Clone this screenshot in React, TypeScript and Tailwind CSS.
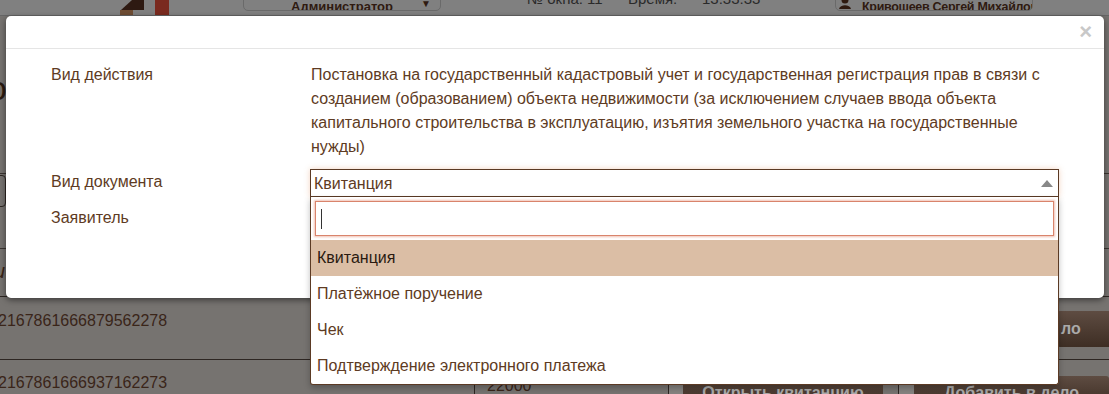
import React from "react";

const options = ["Квитанция", "Платёжное поручение", "Чек", "Подтверждение электронного платежа"];

function Header() {
  return (
    <div className="h-[16px] border-b border-[#666] bg-[#808080] flex items-start overflow-hidden shrink-0">
      <svg width="52" height="16" viewBox="0 0 52 16" className="ml-[118px] shrink-0">
        <polygon points="3,10 14,0 26,0 26,10" fill="#2e1a12" />
        <rect x="2" y="10" width="13" height="6" fill="#6e4c33" />
        <rect x="37" y="0" width="14" height="16" fill="#7a2a1f" />
      </svg>
      <div className="ml-[73px] w-[198px] h-[12px] -mt-[1px] border border-[#6a6a6a] rounded-b-[5px] flex items-end justify-center relative overflow-hidden shrink-0">
        <span className="text-[13px] font-bold text-[#2f1a10] leading-[16px] translate-y-[5px]">Администратор</span>
        <span className="absolute right-[9px] top-[-4px] text-[10px] text-[#2f1a10]">▼</span>
      </div>
      <div className="ml-[86px] w-[101px] shrink-0 text-[15px] text-[#2a2a2a] leading-[16px] -mt-[9px] whitespace-nowrap">№ окна: 11</div>
      <div className="w-[74px] shrink-0 text-[15px] text-[#2a2a2a] leading-[16px] -mt-[9px] whitespace-nowrap">Время:</div>
      <div className="w-[133px] shrink-0 text-[15px] text-[#2a2a2a] leading-[16px] -mt-[9px] whitespace-nowrap">13:33:33</div>
      <div className="w-[198px] h-[12px] -mt-[1px] border border-[#6a6a6a] rounded-b-[5px] flex items-end overflow-hidden shrink-0">
        <svg width="14" height="12" viewBox="0 0 14 12" className="ml-[2px] shrink-0">
          <circle cx="7" cy="2" r="3.5" fill="#2f1a10" />
          <path d="M1 11 C2 6 12 6 13 11 Z" fill="#2f1a10" />
        </svg>
        <span className="ml-[10px] text-[12.5px] font-bold text-[#2f1a10] leading-[16px] translate-y-[5px] whitespace-nowrap tracking-[-0.3px]">Кривошеев Сергей Михайлов</span>
      </div>
    </div>
  );
}

function Background() {
  return (
    <div className="absolute inset-0 flex flex-col bg-[#767370]">
      <Header />
      <div className="h-[158px] border-b border-[#3b3531] relative overflow-hidden shrink-0">
        <div className="-ml-[12px] mt-[52px] text-[34px] leading-[40px] text-[#2a1a10]">о</div>
      </div>
      <div className="h-[75px] border-b border-[#3b3531] shrink-0 pt-[1px]">
        <div className="-ml-[10px] w-[16px] h-[32px] border border-[#2d2622] rounded-[4px]" />
      </div>
      <div className="h-[48px] border-b border-[#2d2622] shrink-0 pt-[10px]">
        <div className="-ml-[6px] text-[20px] italic text-[#3a2416] leading-[24px]">и</div>
      </div>
      <div className="h-[63px] border-b border-[#2d2622] flex shrink-0">
        <div className="w-[477px] pt-[12px] -ml-[2px] text-[16px] leading-[24px] text-[#3a2519]">2167861666879562278</div>
        <div className="flex-1" />
        <div className="w-[52px] mt-[14px] h-[36px] bg-gradient-to-b from-[#5e4c42] to-[#3e2e24] rounded-l-[3px] flex items-center pl-[4px] text-[16px] font-bold text-[#aaa]">ло</div>
      </div>
      <div className="flex flex-1">
        <div className="w-[477px] pt-[11px] -ml-[2px] text-[16px] leading-[24px] text-[#3a2519] border-r border-[#2d2622]">2167861666937162273</div>
        <div className="w-[194px] pt-[14px] pl-[12px] text-[16px] leading-[24px] text-[#3a2519] border-r border-[#2d2622]">22000</div>
        <div className="w-[14px] bg-[#858380]" />
        <div className="w-[200px] mt-[16px] h-[30px] bg-gradient-to-b from-[#5e4c42] to-[#3e2e24] rounded-[3px] flex justify-center pt-[8px] text-[16px] font-bold text-[#aaa] leading-[18px]">Открыть квитанцию</div>
        <div className="w-[16px] border-r border-[#2d2622]" />
        <div className="w-[15px] bg-[#858380]" />
        <div className="flex-1 mt-[16px] h-[30px] bg-gradient-to-b from-[#5e4c42] to-[#3e2e24] rounded-[3px] flex justify-center pt-[8px] text-[16px] font-bold text-[#aaa] leading-[18px]">Добавить в дело</div>
      </div>
    </div>
  );
}

function Modal() {
  return (
    <div className="absolute left-[6px] top-[16px] w-[1098px] h-[282px] bg-white rounded-[5px] shadow-[0_2px_6px_rgba(0,0,0,0.5)] text-[16px] leading-[24px] text-[#5e3b23]">
      <div className="h-[33px] border-b border-[#e5e5e5] flex justify-end items-center pr-[12px]">
        <span className="text-[22px] font-bold leading-none text-[#c8c8c8]">×</span>
      </div>
      <div className="pt-[14px] pl-[45px] flex flex-col">
        <div className="flex">
          <div className="w-[260px] shrink-0">Вид действия</div>
          <div className="w-[748px]">
            Постановка на государственный кадастровый учет и государственная регистрация прав в связи с созданием (образованием) объекта недвижимости (за исключением случаев ввода объекта капитального строительства в эксплуатацию, изъятия земельного участка на государственные нужды)
          </div>
        </div>
        <div className="flex mt-[10px]">
          <div className="w-[259px] shrink-0 pt-[1px]">Вид документа</div>
          <div className="w-[749px] relative">
            <div className="h-[28px] border border-[#5b3a24] flex items-center pl-[3px] pr-[5px] shadow-[0_0_6px_rgba(226,160,120,0.45)] bg-white">
              <span className="flex-1 pt-[1px]">Квитанция</span>
              <svg width="12" height="7" viewBox="0 0 12 7"><polygon points="0,7 6,0 12,7" fill="#888" /></svg>
            </div>
            <div className="absolute left-0 right-0 top-full z-10 bg-white border-x border-b border-[#5b3a24] rounded-b-[3px] shadow-[0_3px_6px_rgba(0,0,0,0.25)]">
              <div className="px-[4px] pt-[4px] pb-[4px]">
                <div className="h-[35px] border border-[#d9846c] shadow-[0_0_2px_1px_rgba(230,150,128,0.6)] flex items-center pl-[5px]">
                  <span className="w-[1px] h-[20px] bg-[#333]" />
                </div>
              </div>
              {options.map((o, i) => (
                <div
                  key={o}
                  className={
                    "h-[36px] flex items-center pl-[6px] " +
                    (i === 0 ? "bg-[#dbbea5] text-[#2a1a10]" : "text-[#5e3b23]")
                  }
                >
                  {o}
                </div>
              ))}
            </div>
          </div>
        </div>
        <div className="flex mt-[9px]">
          <div className="w-[260px] shrink-0">Заявитель</div>
        </div>
      </div>
    </div>
  );
}

export default function App() {
  return (
    <div className="relative w-[1109px] h-[394px] overflow-hidden font-['Liberation_Sans',Arial,sans-serif]">
      <Background />
      <Modal />
    </div>
  );
}
